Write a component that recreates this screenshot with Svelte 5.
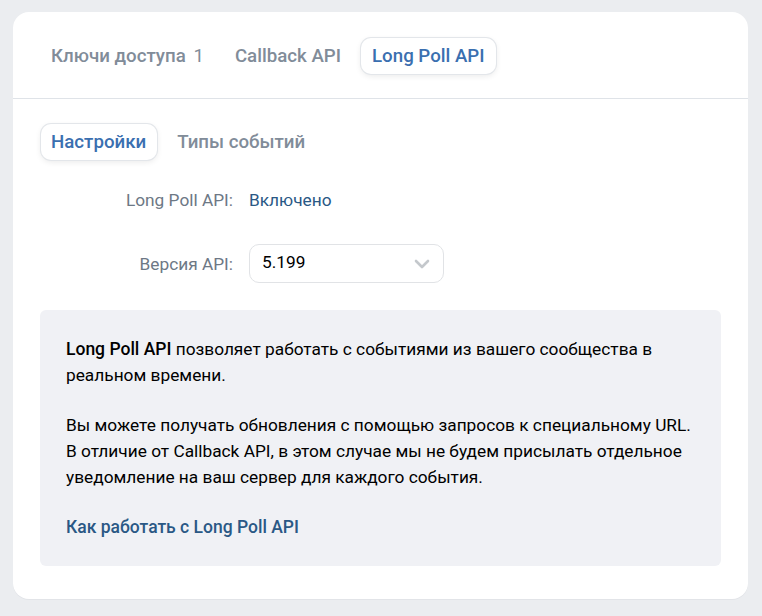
<script>
	let tabs = [
		{ label: 'Ключи доступа', count: 1 },
		{ label: 'Callback API' },
		{ label: 'Long Poll API', active: true }
	];
	let subtabs = [{ label: 'Настройки', active: true }, { label: 'Типы событий' }];
</script>

<div class="page">
	<div class="card">
		<div class="tabs">
			{#each tabs as tab}
				<button class="tab" class:active={tab.active}>
					{tab.label}
					{#if tab.count}<span class="count">{tab.count}</span>{/if}
				</button>
			{/each}
		</div>
		<div class="content">
			<div class="subtabs">
				{#each subtabs as tab}
					<button class="tab" class:active={tab.active}>{tab.label}</button>
				{/each}
			</div>
			<div class="row first">
				<div class="label">Long Poll API:</div>
				<div class="value">Включено</div>
			</div>
			<div class="row second">
				<div class="label">Версия API:</div>
				<div class="select">
					<span>5.199</span>
					<svg width="16" height="10" viewBox="0 0 16 10" fill="none">
						<path d="M2 2 8 8l6-6" stroke="#c4c8cc" stroke-width="2.6" stroke-linecap="round" stroke-linejoin="round" />
					</svg>
				</div>
			</div>
			<div class="info">
				<p><b>Long Poll API</b> позволяет работать с событиями из вашего сообщества в реальном времени.</p>
				<p>Вы можете получать обновления с помощью запросов к специальному URL. В отличие от Callback API, в этом случае мы не будем присылать отдельное уведомление на ваш сервер для каждого события.</p>
				<a href="#top">Как работать с Long Poll API</a>
			</div>
		</div>
	</div>
</div>

<style>
	:global(body) {
		margin: 0;
		background: #ebedf0;
		font-family: Roboto, sans-serif;
	}
	.page {
		height: 616px;
		box-sizing: border-box;
		padding: 12px 14px 17px 13px;
	}
	.card {
		background: #fff;
		border-radius: 16px;
		height: 100%;
		box-sizing: border-box;
		box-shadow: 0 1px 0 0 #e2e4e8;
	}
	.tabs {
		display: flex;
		align-items: center;
		gap: 9px;
		height: 87px;
		padding: 2px 27px 0;
		box-sizing: border-box;
		border-bottom: 1px solid #dfe3e8;
	}
	.tab {
		height: 36px;
		padding: 0 11px;
		border: none;
		background: none;
		border-radius: 10px;
		font: 500 18.7px Roboto, sans-serif;
		color: #818c99;
		white-space: nowrap;
	}
	.tab.active {
		color: #3a6fb0;
		background: #fff;
		box-shadow: 0 0 0 1px #e3e6ea, 0 2px 6px rgba(0, 0, 0, 0.09);
	}
	.count {
		margin-left: 3px;
		font-weight: 400;
	}
	.content {
		padding: 24px 27px 0;
	}
	.subtabs {
		display: flex;
		gap: 10px;
		padding: 1px 0 0 0.5px;
	}
	.subtabs .tab {
		padding: 0 10.5px;
	}
	.row {
		display: flex;
		align-items: center;
		gap: 16px;
	}
	.row.first {
		margin-top: 21px;
		height: 38px;
	}
	.row.second {
		margin-top: 25px;
		height: 39px;
	}
	.label {
		width: 193px;
		text-align: right;
		font-size: 17.3px;
		color: #6d7885;
	}
	.value {
		font-size: 17.3px;
		color: #2a5885;
	}
	.select {
		width: 195px;
		height: 39px;
		box-sizing: border-box;
		border: 1px solid #e1e3e6;
		border-radius: 10px;
		padding: 0 13px 3px 12px;
		display: flex;
		align-items: center;
		justify-content: space-between;
		font-size: 17.3px;
		color: #000;
	}
	.select svg {
		margin-top: 3px;
	}
	.info {
		margin-top: 27px;
		background: #f0f1f5;
		border-radius: 6px;
		padding: 26px;
		font-size: 17.3px;
		line-height: 26px;
		color: #000;
		height: 256px;
		box-sizing: border-box;
	}
	.info p {
		margin: 0 0 24px;
	}
	.info b {
		font-weight: 500;
		font-size: 17.5px;
	}
	.info a {
		font-weight: 500;
		font-size: 17.5px;
		color: #2a5885;
		text-decoration: none;
	}
</style>
